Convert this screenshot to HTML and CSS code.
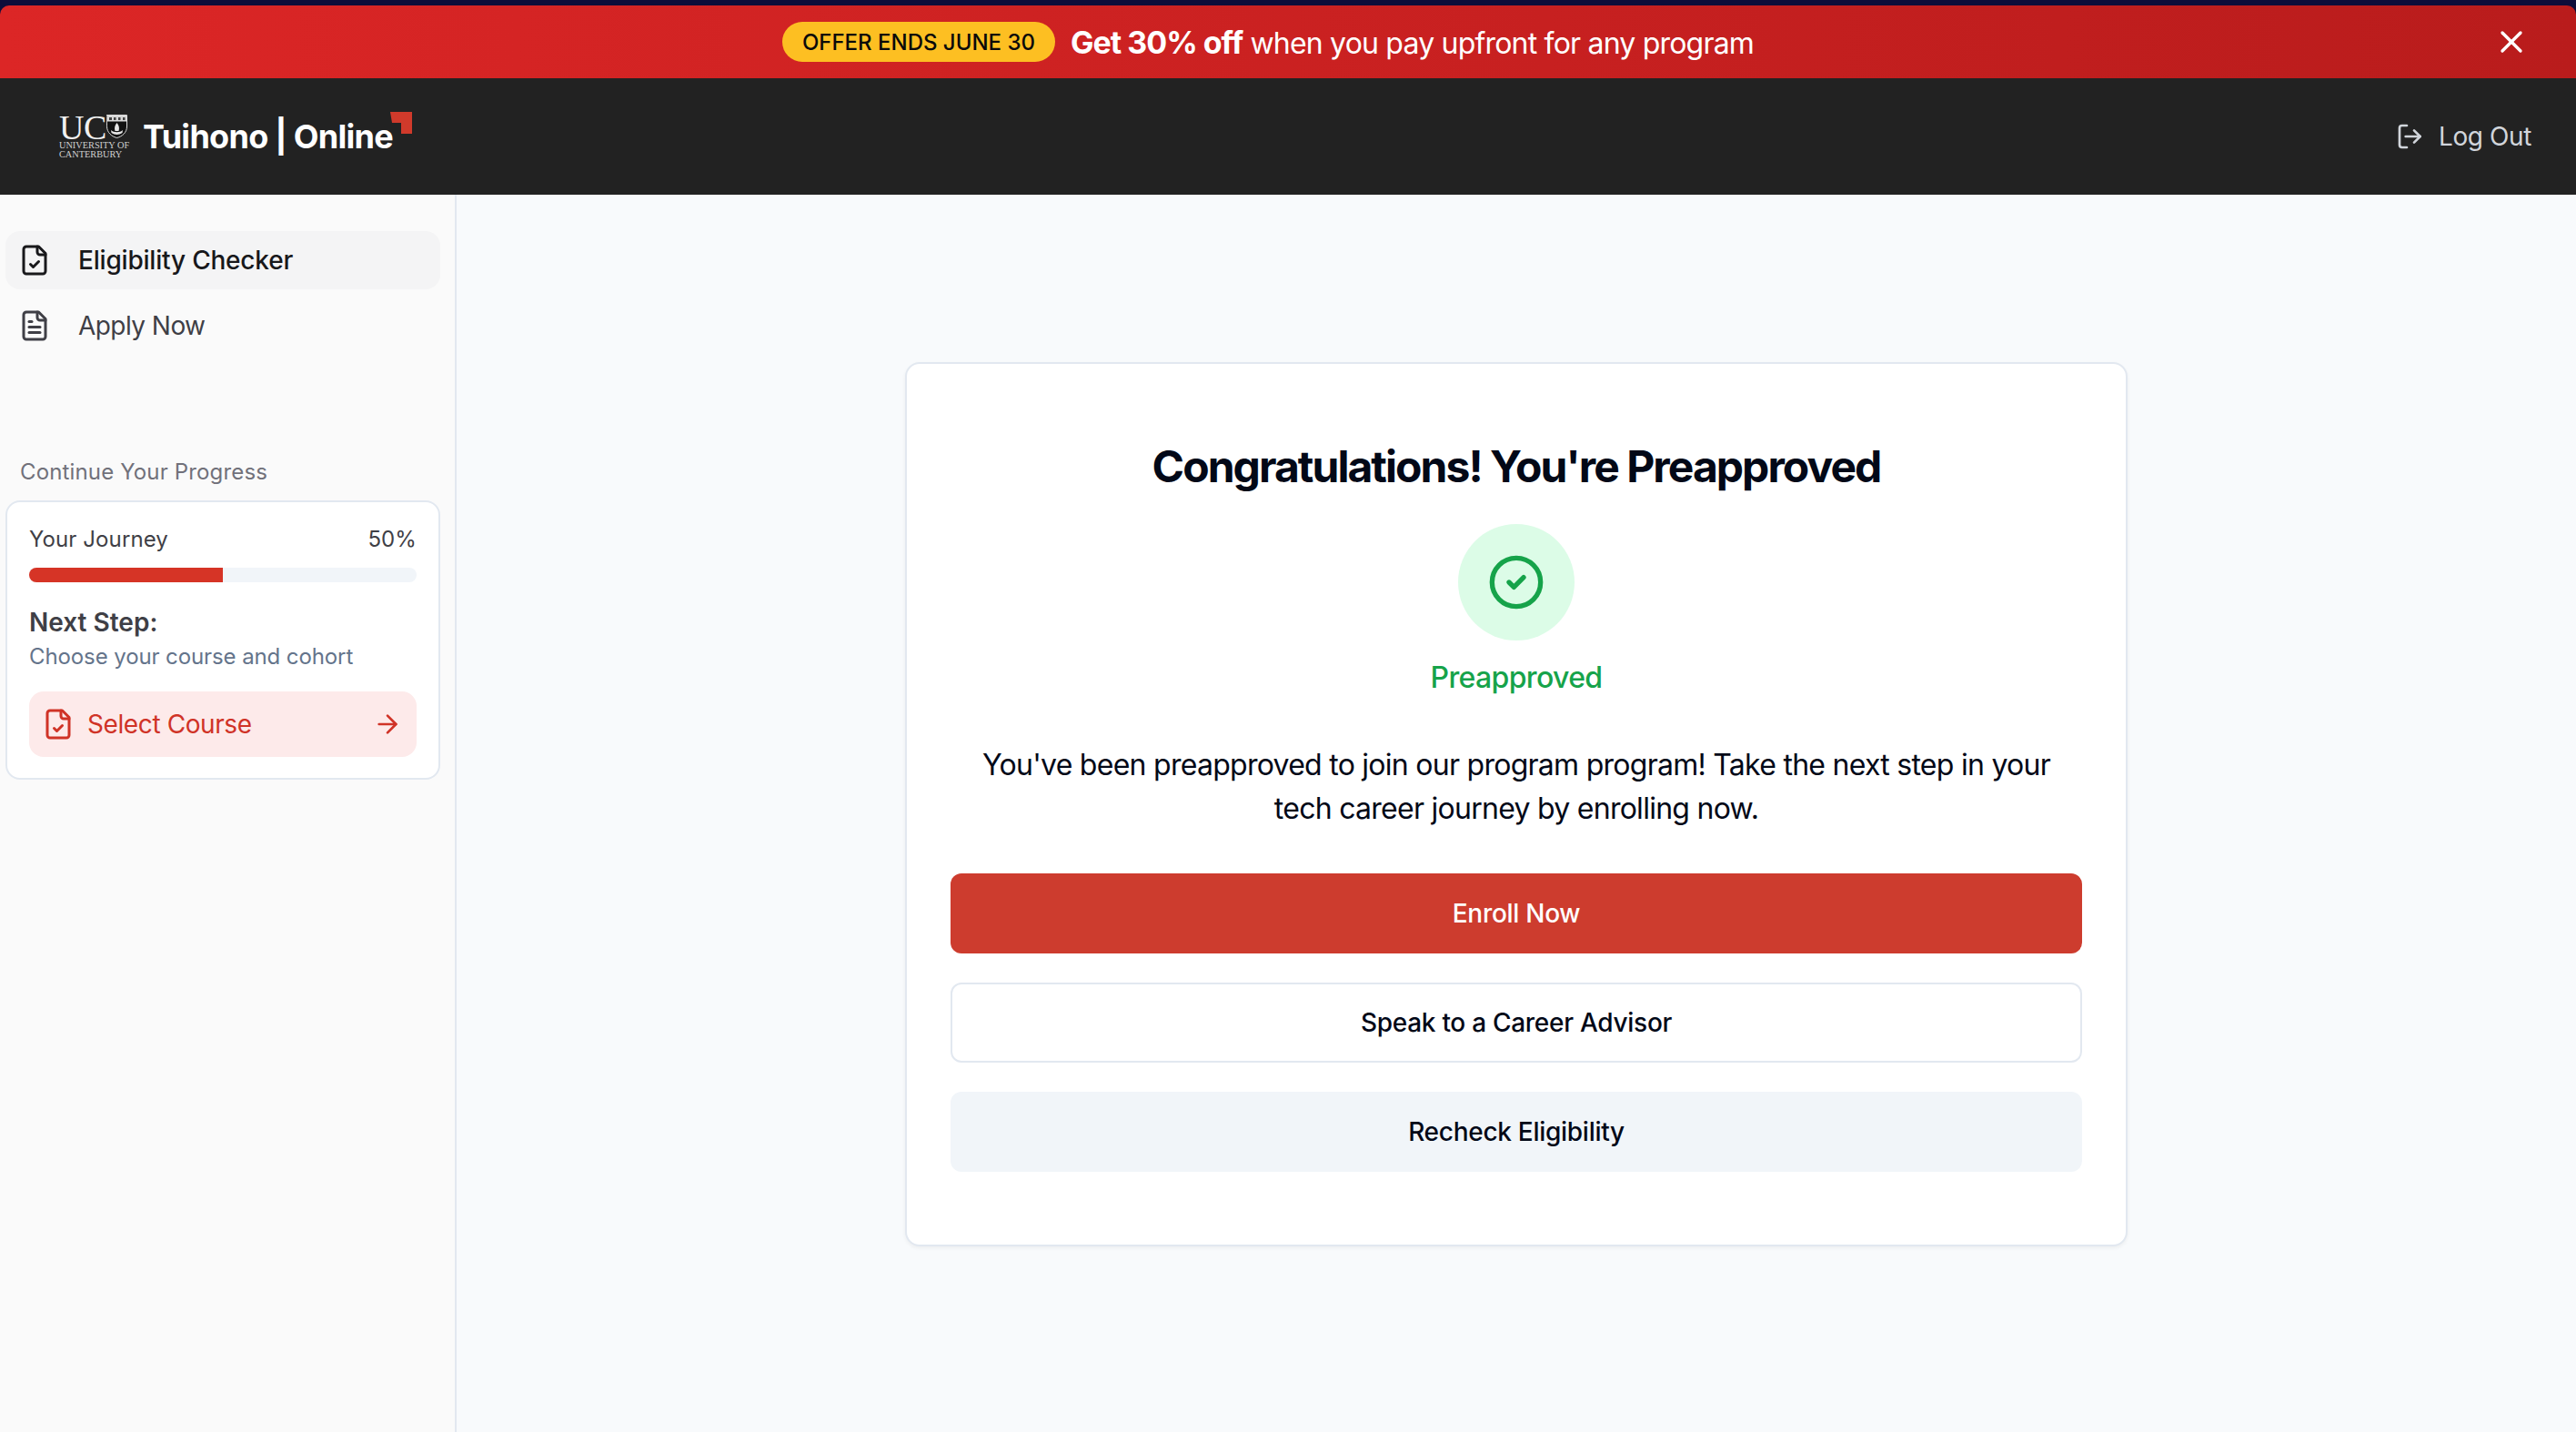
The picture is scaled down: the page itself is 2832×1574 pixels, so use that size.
FILE: index.html
```html
<!DOCTYPE html>
<html lang="en">
<head>
<meta charset="utf-8">
<title>Tuihono Online</title>
<link rel="stylesheet" href="styles.css">
</head>
<body>
<div class="banner">
  <div class="banner-content">
    <span class="pill">OFFER ENDS JUNE 30</span>
    <span class="banner-text"><strong>Get 30% off</strong> when you pay upfront for any program</span>
  </div>
  <button class="banner-close" aria-label="Close">
    <svg class="icon-close" viewBox="0 0 24 24"><path d="M18 6 6 18"/><path d="m6 6 12 12"/></svg>
  </button>
</div>
<header class="topbar">
  <div class="brand">
    <div class="uc-logo">
      <div class="uc-top">
        <span class="uc-letters">UC</span>
        <svg class="uc-shield" viewBox="0 0 23 26">
          <path class="shield-body" d="M0.5 0.5H22.5V13C22.5 20 17 24 11.5 25.5C6 24 0.5 20 0.5 13Z"/>
          <path class="shield-chief" d="M1 1H22V7.5H1Z"/>
          <path class="shield-marks" d="M3 3h3v3H3zM8 3h2.500v3H8zM13 3h2.500v3H13zM18 3h2.500v3H18z"/>
          <path class="shield-tree" d="M11.500 9C9 12 8.500 15 9.500 18H13.500C14.500 15 14 12 11.500 9ZM5 17C8 20 15 20 18 17L17.500 20C14 22.500 9 22.500 5.500 20Z"/>
        </svg>
      </div>
      <div class="uc-sub">UNIVERSITY OF</div>
      <div class="uc-sub">CANTERBURY</div>
    </div>
    <div class="wordmark">Tuihono | Online
      <svg class="wordmark-corner" viewBox="0 0 24 24"><path d="M0 0H24V24H12V12H2Z"/></svg>
    </div>
  </div>
  <a class="logout">
    <svg class="icon-logout" viewBox="0 0 24 24"><path d="M9 21H5a2 2 0 0 1-2-2V5a2 2 0 0 1 2-2h4"/><path d="m15 17 5-5-5-5"/><path d="M20 12H8"/></svg>
    <span>Log Out</span>
  </a>
</header>
<div class="layout">
  <aside class="sidebar">
    <nav class="nav">
      <a class="nav-item active">
        <svg class="icon-nav" viewBox="0 0 24 24"><path d="M15 2H6a2 2 0 0 0-2 2v16a2 2 0 0 0 2 2h12a2 2 0 0 0 2-2V7Z"/><path d="M14 2v4a2 2 0 0 0 2 2h4"/><path d="m9 15 2 2 4-4"/></svg>
        <span>Eligibility Checker</span>
      </a>
      <a class="nav-item">
        <svg class="icon-nav" viewBox="0 0 24 24"><path d="M15 2H6a2 2 0 0 0-2 2v16a2 2 0 0 0 2 2h12a2 2 0 0 0 2-2V7Z"/><path d="M14 2v4a2 2 0 0 0 2 2h4"/><path d="M10 9H8"/><path d="M16 13H8"/><path d="M16 17H8"/></svg>
        <span>Apply Now</span>
      </a>
    </nav>
    <div class="progress-label">Continue Your Progress</div>
    <section class="progress-card">
      <div class="journey-row"><span>Your Journey</span><span>50%</span></div>
      <div class="bar"><div class="bar-fill"></div></div>
      <div class="next-title">Next Step:</div>
      <div class="next-desc">Choose your course and cohort</div>
      <a class="select-btn">
        <svg class="icon-nav" viewBox="0 0 24 24"><path d="M15 2H6a2 2 0 0 0-2 2v16a2 2 0 0 0 2 2h12a2 2 0 0 0 2-2V7Z"/><path d="M14 2v4a2 2 0 0 0 2 2h4"/><path d="m9 15 2 2 4-4"/></svg>
        <span class="select-text">Select Course</span>
        <svg class="icon-arrow" viewBox="0 0 24 24"><path d="M5 12h14"/><path d="m12 5 7 7-7 7"/></svg>
      </a>
    </section>
  </aside>
  <main class="main">
    <section class="card">
      <h1 class="title">Congratulations! You're Preapproved</h1>
      <div class="status-circle">
        <svg class="icon-status" viewBox="0 0 24 24"><circle cx="12" cy="12" r="10"/><path d="m9 12 2 2 4-4"/></svg>
      </div>
      <div class="status-text">Preapproved</div>
      <p class="message">You've been preapproved to join our program program! Take the next step in your tech career journey by enrolling now.</p>
      <div class="actions">
        <button class="btn btn-primary">Enroll Now</button>
        <button class="btn btn-outline">Speak to a Career Advisor</button>
        <button class="btn btn-muted">Recheck Eligibility</button>
      </div>
    </section>
  </main>
</div>
</body>
</html>
```
FILE: styles.css
```css
* { box-sizing: border-box; }
html, body { margin: 0; height: 100%; }
body {
  display: flex;
  flex-direction: column;
  height: 100vh;
  overflow: hidden;
  padding-top: 6px;
  background: #0d0d3a;
  font-family: Inter, "Liberation Sans", sans-serif;
  color: #020817;
}
svg { display: block; flex: none; fill: none; stroke: currentColor; stroke-linecap: round; stroke-linejoin: round; stroke-width: 2; }

.banner {
  height: 80px;
  flex: none;
  display: flex;
  align-items: center;
  justify-content: center;
  padding-right: 44px;
  background: linear-gradient(90deg, #dc2626, #b91c1c);
  border-radius: 10px 10px 0 0;
  color: #fff;
  position: relative;
}
.banner-content { display: flex; align-items: center; gap: 17px; }
.pill {
  height: 44px;
  padding: 0 22px;
  display: flex;
  align-items: center;
  border-radius: 22px;
  background: #fdbf22;
  color: #0a0a0a;
  font-size: 24px;
  font-weight: 500;
}
.banner-text { font-size: 32px; letter-spacing: -0.8px; }
.banner-text strong { font-size: 34px; font-weight: 700; letter-spacing: -1px; }
.banner-close {
  position: absolute;
  right: 51px;
  top: 20px;
  width: 40px;
  height: 40px;
  padding: 0;
  background: none;
  border: 0;
  color: #fff;
}
.icon-close { width: 40px; height: 40px; }

.topbar {
  height: 128px;
  flex: none;
  display: flex;
  align-items: center;
  justify-content: space-between;
  padding: 0 49px 0 65px;
  background: #222222;
  color: #fff;
}
.brand { display: flex; align-items: center; gap: 17px; }
.uc-logo { width: 75px; color: #f1f1f1; font-family: "Liberation Serif", serif; }
.uc-top { display: flex; align-items: flex-start; height: 29px; }
.uc-letters { font-size: 38px; line-height: 28px; letter-spacing: -0.5px; }
.uc-shield { width: 23px; height: 26px; stroke: none; }
.shield-body { fill: #111; stroke: #ddd; stroke-width: 1; }
.shield-chief { fill: #d8d8d8; }
.shield-marks { fill: #444; }
.shield-tree { fill: #e4e4e4; }
.uc-sub { font-size: 10.300px; line-height: 10px; color: #d0d0d0; white-space: nowrap; }
.wordmark { position: relative; font-size: 36px; font-weight: 700; letter-spacing: -0.72px; white-space: nowrap; }
.wordmark-corner { position: absolute; left: 100%; top: -5px; width: 24px; height: 24px; fill: #d03a2b; stroke: none; margin-left: -3px; }
.logout { display: flex; align-items: center; gap: 15px; color: #d1d5db; font-size: 28px; letter-spacing: -0.4px; }
.icon-logout { width: 32px; height: 32px; }

.layout { flex: 1; display: flex; min-height: 0; background: #f8fafc; }
.sidebar {
  width: 502px;
  flex: none;
  padding: 40px 16px 0 6px;
  background: #fafafa;
  border-right: 2px solid #e2e8f0;
}
.nav { display: flex; flex-direction: column; gap: 8px; }
.nav-item {
  height: 64px;
  display: flex;
  align-items: center;
  gap: 30px;
  padding-left: 14px;
  border-radius: 16px;
  font-size: 28px;
  letter-spacing: -0.55px;
  color: #3f3f46;
}
.nav-item.active { background: #f4f4f5; color: #18181b; font-weight: 500; letter-spacing: -0.2px; }
.icon-nav { width: 36px; height: 36px; }
.progress-label { margin: 113px 0 0 16px; font-size: 24px; line-height: 32px; letter-spacing: 0.15px; color: #71717a; }
.progress-card {
  margin-top: 15px;
  height: 307px;
  padding: 25px 24px 24px;
  border: 2px solid #e2e8f0;
  border-radius: 16px;
  background: #fff;
}
.journey-row { display: flex; justify-content: space-between; font-size: 24px; line-height: 32px; color: #3f3f46; letter-spacing: 0.1px; }
.bar { height: 16px; margin-top: 15px; border-radius: 8px; background: #f1f5f9; overflow: hidden; }
.bar-fill { width: 50%; height: 100%; background: #d63426; }
.next-title { margin-top: 24px; font-size: 28px; line-height: 40px; font-weight: 600; color: #3f3f46; }
.next-desc { margin-top: 2px; font-size: 24px; line-height: 32px; letter-spacing: -0.1px; color: #64748b; }
.select-btn {
  height: 72px;
  margin-top: 22px;
  display: flex;
  align-items: center;
  padding: 0 16px 0 14px;
  border-radius: 16px;
  background: #fdeaea;
  color: #d03327;
  font-size: 28px;
  letter-spacing: -0.4px;
}
.select-text { flex: 1; margin-left: 14px; }
.icon-arrow { width: 32px; height: 32px; }

.main { flex: 1; display: flex; justify-content: center; align-items: flex-start; padding-top: 184px; }
.card {
  width: 1344px;
  padding: 80px 48px;
  border: 2px solid #e2e8f0;
  border-radius: 16px;
  background: #fff;
  box-shadow: 0 2px 4px rgba(0,0,0,0.05);
  display: flex;
  flex-direction: column;
  align-items: center;
}
.title { margin: 0; padding-top: 1px; font-size: 48px; line-height: 64px; font-weight: 700; letter-spacing: -1.95px; color: #020817; }
.status-circle {
  width: 128px;
  height: 128px;
  margin-top: 31px;
  display: flex;
  align-items: center;
  justify-content: center;
  border-radius: 50%;
  background: #dcfce7;
  color: #16a34a;
}
.icon-status { width: 64px; height: 64px; }
.status-text { margin-top: 17px; font-size: 32px; line-height: 48px; font-weight: 500; letter-spacing: -0.65px; color: #16a34a; }
.message { margin: 48px 0 0; font-size: 32px; line-height: 48px; letter-spacing: -0.73px; text-align: center; color: #020817; }
.actions { align-self: stretch; margin-top: 47px; display: flex; flex-direction: column; gap: 32px; }
.btn {
  height: 88px;
  border-radius: 12px;
  border: 0;
  font-family: inherit;
  font-size: 28px;
  font-weight: 500;
  letter-spacing: -0.28px;
  color: #020817;
}
.btn-primary { background: #cd3c2e; color: #fff; }
.btn-outline { background: #fff; border: 2px solid #e2e8f0; }
.btn-muted { background: #f1f5f9; }
```
